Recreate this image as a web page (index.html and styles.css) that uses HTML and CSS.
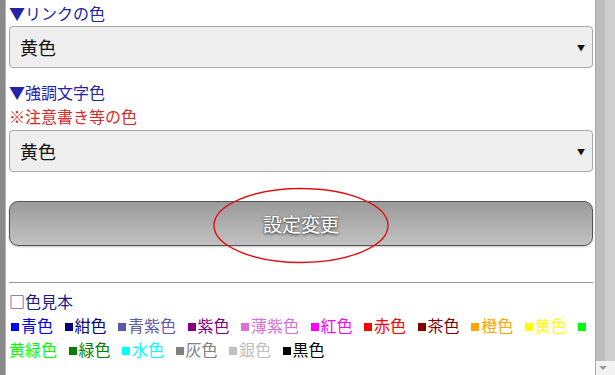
FILE: index.html
```html
<!DOCTYPE html>
<html lang="ja">
<head>
<meta charset="UTF-8" />
<meta name="viewport" content="width=device-width, initial-scale=1.0" />
<title>色の設定</title>
<link rel="stylesheet" href="styles.css">
</head>
<body>
<div class="frame">
  <div class="page">
    <div class="label">▼リンクの色</div>
    <div class="select first"><span>黄色</span><span class="caret">▼</span></div>

    <div class="label second">▼強調文字色</div>
    <div class="note">※注意書き等の色</div>
    <div class="select"><span>黄色</span><span class="caret">▼</span></div>

    <div class="submit-wrap">
      <button class="submit">設定変更</button>
      <svg class="mark" width="184" height="80" viewBox="0 0 184 80">
        <ellipse cx="92" cy="38.5" rx="87" ry="37" fill="none" stroke="#e01010" stroke-width="1.4" />
      </svg>
    </div>

    <hr class="rule">

    <div class="samples-title">□色見本</div>
    <div class="samples">
      <span class="sw" style="background:#0000ff"></span><span class="nm" style="color:#0000ff">青色</span><span class="sw" style="background:#000080"></span><span class="nm" style="color:#000080">紺色</span><span class="sw" style="background:#5a5aa8"></span><span class="nm" style="color:#5a5aa8">青紫色</span><span class="sw" style="background:#800080"></span><span class="nm" style="color:#800080">紫色</span><span class="sw" style="background:#da70d6"></span><span class="nm" style="color:#da70d6">薄紫色</span><span class="sw" style="background:#ff00ff"></span><span class="nm" style="color:#ff00ff">紅色</span><span class="sw" style="background:#ff0000"></span><span class="nm" style="color:#ff0000">赤色</span><span class="sw" style="background:#800000"></span><span class="nm" style="color:#800000">茶色</span><span class="sw" style="background:#ffa500"></span><span class="nm" style="color:#ffa500">橙色</span><span class="sw" style="background:#ffff00"></span><span class="nm" style="color:#ffff00">黄色</span><span class="sw" style="background:#00ff00"></span><span class="nm" style="color:#00ff00">黄緑色</span><span class="sw" style="background:#008000"></span><span class="nm" style="color:#008000">緑色</span><span class="sw" style="background:#00ffff"></span><span class="nm" style="color:#00ffff">水色</span><span class="sw" style="background:#808080"></span><span class="nm" style="color:#808080">灰色</span><span class="sw" style="background:#c0c0c0"></span><span class="nm" style="color:#c0c0c0">銀色</span><span class="sw" style="background:#000000"></span><span class="nm" style="color:#000000">黒色</span>
    </div>
  </div>
  <div class="scrollbar">
    <div class="thumb"></div>
    <div class="down"><span class="down-arrow"></span></div>
  </div>
</div>
</body>
</html>
```

FILE: styles.css
```css
body { margin: 0; padding: 0; background: #fff; font-family: "Noto Sans CJK JP", "Noto Sans", sans-serif; overflow: hidden; }
.frame { display: flex; height: 375px; border-left: 5px solid #8a8a8a; }
.page { flex: 1; padding: 1px 2px 0 3px; border-left: 1px solid #b4b4b4; min-width: 0; }

.label { font-size: 16px; line-height: 24px; color: #2323a8; }
.label.second { margin-top: 12px; }
.note { font-size: 16px; line-height: 24px; color: #d82a2a; }

.select { display: flex; justify-content: space-between; align-items: center; box-sizing: border-box; height: 42px; margin-top: 2px; padding: 0 7px 0 10px; background: #eeeeee; border: 1px solid #a8a8a8; border-radius: 4px; font-size: 18px; color: #111; }
.select.first { margin-top: 1px; }
.caret { font-size: 8px; color: #111; }

.submit-wrap { position: relative; margin-top: 29px; }
.submit { display: block; width: 100%; height: 45px; border: 1px solid #555; border-radius: 9px; background: linear-gradient(#9a9a9a, #c2c2c2); color: #fff; font-family: inherit; font-size: 19px; text-shadow: 0 1px 3px #222; box-shadow: 0 1px 2px rgba(0,0,0,0.25); }
.mark { position: absolute; left: 200px; top: -14px; }

.rule { margin: 36px 0 0 0; border: none; border-top: 1px solid #9a9a9a; height: 0; }

.samples-title { margin-top: 6px; font-size: 16px; line-height: 24px; color: #1b1b88; }
.samples { font-size: 16px; line-height: 24px; }
.sw { display: inline-block; width: 8px; height: 8px; margin: 0 2px; vertical-align: 1px; }
.nm { margin-right: 9.5px; }

.scrollbar { width: 19px; display: flex; flex-direction: column; border-left: 1px solid #a6a6a6; background: linear-gradient(to right, #bdbdbd 0, #bdbdbd 9px, #cfcfcf 9px, #cfcfcf 100%); }
.thumb { flex: 1; }
.down { height: 14px; background: #f2f2f2; position: relative; }
.down-arrow { position: absolute; left: 3px; top: 5px; width: 0; height: 0; border-left: 4px solid transparent; border-right: 4px solid transparent; border-top: 4px solid #9a9a9a; }
```
